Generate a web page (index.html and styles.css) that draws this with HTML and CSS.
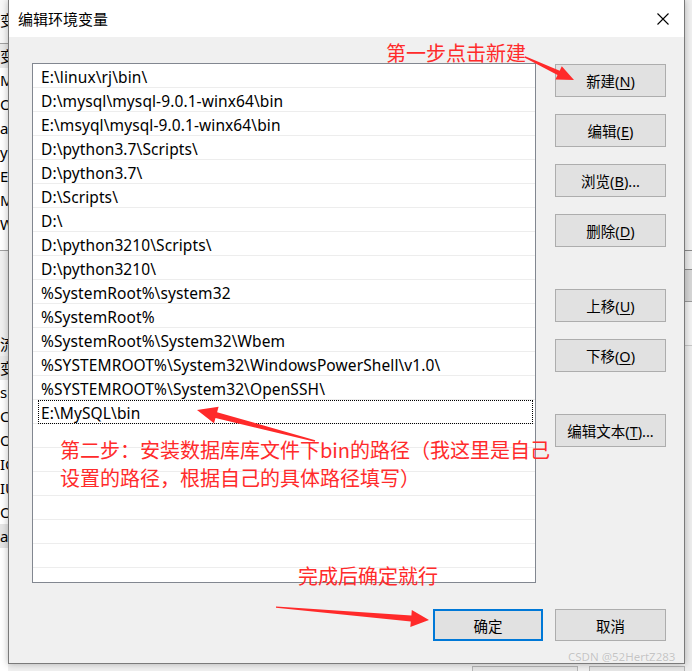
FILE: index.html
```html
<!DOCTYPE html>
<html lang="zh-CN">
<head>
<meta charset="utf-8">
<title>编辑环境变量</title>
<link rel="stylesheet" href="styles.css">
</head>
<body>
<div class="screen">
  <div class="bg-left">
    <div class="bgl-top"><span class="bgl-text">变</span></div>
    <div class="bgl-list">
      <div class="bgl-row bgl-hdr">变</div>
      <div class="bgl-row">MO</div>
      <div class="bgl-row">Or</div>
      <div class="bgl-row">a</div>
      <div class="bgl-row">y</div>
      <div class="bgl-row">E</div>
      <div class="bgl-row">M</div>
      <div class="bgl-row">W</div>
    </div>
    <div class="bgl-mid">
      <div class="bgl-row">流</div>
    </div>
    <div class="bgl-list2">
      <div class="bgl-row bgl-hdr">变</div>
      <div class="bgl-row">sl</div>
      <div class="bgl-row">Co</div>
      <div class="bgl-row">Or</div>
      <div class="bgl-row">IC</div>
      <div class="bgl-row">IU</div>
      <div class="bgl-row">OS</div>
      <div class="bgl-row bgl-sel">a</div>
    </div>
  </div>

  <div class="dialog">
    <div class="titlebar">
      <span class="title">编辑环境变量</span>
      <svg class="close" width="12" height="12" viewBox="0 0 12 12"><path d="M0.5 0.5 L11.5 11.5 M11.5 0.5 L0.5 11.5" stroke="#000" stroke-width="1.1" fill="none"/></svg>
    </div>
    <div class="body">
      <div class="main">
        <div class="list">
          <div class="row"><div class="cell">E:\linux\rj\bin\</div></div>
          <div class="row"><div class="cell">D:\mysql\mysql-9.0.1-winx64\bin</div></div>
          <div class="row"><div class="cell">E:\msyql\mysql-9.0.1-winx64\bin</div></div>
          <div class="row"><div class="cell">D:\python3.7\Scripts\</div></div>
          <div class="row"><div class="cell">D:\python3.7\</div></div>
          <div class="row"><div class="cell">D:\Scripts\</div></div>
          <div class="row"><div class="cell">D:\</div></div>
          <div class="row"><div class="cell">D:\python3210\Scripts\</div></div>
          <div class="row"><div class="cell">D:\python3210\</div></div>
          <div class="row"><div class="cell">%SystemRoot%\system32</div></div>
          <div class="row"><div class="cell">%SystemRoot%</div></div>
          <div class="row"><div class="cell">%SystemRoot%\System32\Wbem</div></div>
          <div class="row"><div class="cell">%SYSTEMROOT%\System32\WindowsPowerShell\v1.0\</div></div>
          <div class="row"><div class="cell">%SYSTEMROOT%\System32\OpenSSH\</div></div>
          <div class="row focus"><div class="cell">E:\MySQL\bin</div></div>
          <div class="row"><div class="cell"></div></div>
          <div class="row"><div class="cell"></div></div>
          <div class="row"><div class="cell"></div></div>
          <div class="row"><div class="cell"></div></div>
          <div class="row"><div class="cell"></div></div>
          <div class="row"><div class="cell"></div></div>
          <div class="row"><div class="cell"></div></div>
        </div>
        <div class="buttons">
          <button class="btn">新建(<u>N</u>)</button>
          <button class="btn">编辑(<u>E</u>)</button>
          <button class="btn">浏览(<u>B</u>)...</button>
          <button class="btn">删除(<u>D</u>)</button>
          <button class="btn gap">上移(<u>U</u>)</button>
          <button class="btn">下移(<u>O</u>)</button>
          <button class="btn gap">编辑文本(<u>T</u>)...</button>
        </div>
      </div>
      <div class="footer">
        <button class="btn btn-ok">确定</button>
        <button class="btn btn-cancel">取消</button>
      </div>
    </div>
  </div>

  <div class="bg-right">
    <div class="bgr-a"></div>
    <div class="bgr-b"></div>
    <div class="bgr-c"></div>
    <div class="bgr-d"></div>
    <div class="bgr-e"></div>
  </div>

  <div class="bg-bottom">
    <div class="bgb-btn bgb-1"></div>
    <div class="bgb-btn bgb-2"></div>
  </div>
</div>

<div class="note note1">第一步点击新建</div>
<div class="note note2">第二步：安装数据库库文件下bin的路径（我这里是自己<br>设置的路径，根据自己的具体路径填写）</div>
<div class="note note3">完成后确定就行</div>

<svg class="arrows" width="692" height="671" viewBox="0 0 692 671">
  <polygon fill="#ff2a2a" points="525.2,56.3 559.7,70.7 561.8,66.2 574,80 555.4,79.4 557.5,75.1 524.8,57.7"/>
  <polygon fill="#ff2a2a" points="315.2,440.3 217.1,412.2 218.6,406.8 197,410 214.0,423.2 215.5,418.0 314.8,441.7"/>
  <polygon fill="#ff2a2a" points="276,606.4 411.4,615.5 411.8,610.0 429,620 410.3,627.0 410.8,621.5 276,607.8"/>
</svg>

<div class="watermark">CSDN @52HertZ283</div>
</body>
</html>
```

FILE: styles.css
```css
* {
  box-sizing: border-box;
}

html,
body {
  margin: 0;
  padding: 0;
}

body {
  width: 692px;
  height: 671px;
  overflow: hidden;
  position: relative;
  background: #f0f0f0;
  font-family: "Noto Sans", "Noto Sans CJK SC", sans-serif;
  color: #000;
}

.screen {
  display: grid;
  grid-template-columns: 8px 677px 7px;
  grid-template-rows: 664px 7px;
  width: 692px;
  height: 671px;
}

/* ---------- background windows ---------- */
.bg-left {
  grid-column: 1;
  grid-row: 1 / span 2;
  overflow: hidden;
  display: flex;
  flex-direction: column;
  background: #f0f0f0;
}

.bgl-top {
  height: 44px;
  flex: none;
  border-bottom: 1px solid #a0a0a0;
  background: #f7f7f7;
  padding-top: 8px;
}

.bgl-text,
.bgl-row {
  font-size: 15px;
  line-height: 24px;
  white-space: nowrap;
  color: #000;
}

.bgl-list {
  height: 207px;
  flex: none;
  overflow: hidden;
  background: #fff;
  border-bottom: 1px solid #a0a0a0;
}

.bgl-hdr {
  background: #e9e9e9;
}

.bgl-mid {
  height: 105px;
  flex: none;
  padding-top: 81px;
}

.bgl-list2 {
  flex: 1;
  overflow: hidden;
  background: #fff;
}

.bgl-sel {
  background: #e5e5e5;
}

.bg-right {
  grid-column: 3;
  grid-row: 1 / span 2;
  display: flex;
  flex-direction: column;
  background: #f0f0f0;
}

.bgr-a {
  height: 251px;
  border-bottom: 1px solid #8a8a8a;
}

.bgr-b {
  height: 19px;
  background: #ebebeb;
  border-bottom: 1px solid #8a8a8a;
}

.bgr-c {
  height: 32px;
  background: #d6d6d6;
  border-bottom: 1px solid #9a9a9a;
}

.bgr-d {
  height: 44px;
  background: #f2f2f2;
  border-bottom: 1px solid #c8c8c8;
}

.bgr-e {
  flex: 1;
  background: #ededed;
}

.bg-bottom {
  grid-column: 2;
  grid-row: 2;
  display: flex;
  padding-top: 2px;
}

.bgb-btn {
  height: 12px;
  border: 1px solid #b5b5b5;
  background: #e6e6e6;
}

.bgb-1 {
  width: 111px;
  margin-left: 464px;
}

.bgb-2 {
  width: 100px;
  margin-left: 11px;
}

/* ---------- dialog ---------- */
.dialog {
  grid-column: 2;
  grid-row: 1;
  position: relative;
  z-index: 1;
  display: flex;
  flex-direction: column;
  background: #f0f0f0;
  border: 1px solid #7a7a7a;
  border-top: none;
  box-shadow: 0 0 7px rgba(0, 0, 0, 0.28);
}

.titlebar {
  height: 37px;
  flex: none;
  background: #fff;
  display: flex;
  align-items: center;
  justify-content: space-between;
  padding: 0 15px 0 9px;
}

.title {
  font-family: "Noto Sans CJK SC", sans-serif;
  font-size: 15px;
  line-height: 20px;
  color: #000;
}

.close {
  display: block;
}

.body {
  flex: 1;
  display: flex;
  flex-direction: column;
  padding: 26px 18px 22px 23px;
}

.main {
  display: flex;
  gap: 19px;
  height: 520px;
}

.list {
  width: 504px;
  height: 520px;
  flex: none;
  background: #fff;
  border: 1px solid #828790;
  overflow: hidden;
}

.row {
  height: 24px;
  border-bottom: 1px solid #ededed;
  padding: 0 2px 0 5px;
}

.cell {
  height: 23px;
  padding-top: 3px;
  line-height: 20px;
  padding-left: 3px;
  font-size: 15.5px;
  letter-spacing: 0.1px;
  white-space: nowrap;
  color: #000;
}

.row.focus .cell {
  border: 1px dotted #000;
  height: 24px;
  padding-top: 2px;
  line-height: 20px;
  padding-left: 2px;
}

.buttons {
  display: flex;
  flex-direction: column;
  width: 111px;
  padding-top: 1px;
}

.btn {
  display: block;
  width: 111px;
  height: 33px;
  padding: 0;
  border: 1px solid #adadad;
  background: #e1e1e1;
  font-family: "Noto Sans", "Noto Sans CJK SC", sans-serif;
  font-size: 14.5px;
  color: #000;
  text-align: center;
}

.buttons .btn + .btn {
  margin-top: 17px;
}

.buttons .btn.gap {
  margin-top: 42px;
}

.btn u {
  text-decoration: underline;
  text-underline-offset: 2px;
}

.footer {
  display: flex;
  justify-content: flex-end;
  gap: 12px;
  margin-top: 26px;
}

.footer .btn {
  height: 32px;
}

.btn-ok {
  width: 110px;
  border: 2px solid #0078d7;
}

/* ---------- annotations ---------- */
.note {
  position: absolute;
  z-index: 3;
  color: #ff2b2b;
  font-family: "Noto Sans CJK SC", sans-serif;
  font-size: 20px;
  line-height: 28px;
  white-space: nowrap;
}

.note1 {
  left: 386px;
  top: 39px;
}

.note2 {
  left: 60px;
  top: 436px;
}

.note3 {
  left: 298px;
  top: 562px;
}

.arrows {
  position: absolute;
  left: 0;
  top: 0;
  z-index: 3;
  pointer-events: none;
}

.watermark {
  position: absolute;
  z-index: 3;
  left: 568px;
  top: 649px;
  font-family: "Noto Sans", sans-serif;
  font-size: 11.5px;
  line-height: 16px;
  color: #c4c4c4;
  text-shadow: 0 0 1px #fff;
  white-space: nowrap;
}
```
